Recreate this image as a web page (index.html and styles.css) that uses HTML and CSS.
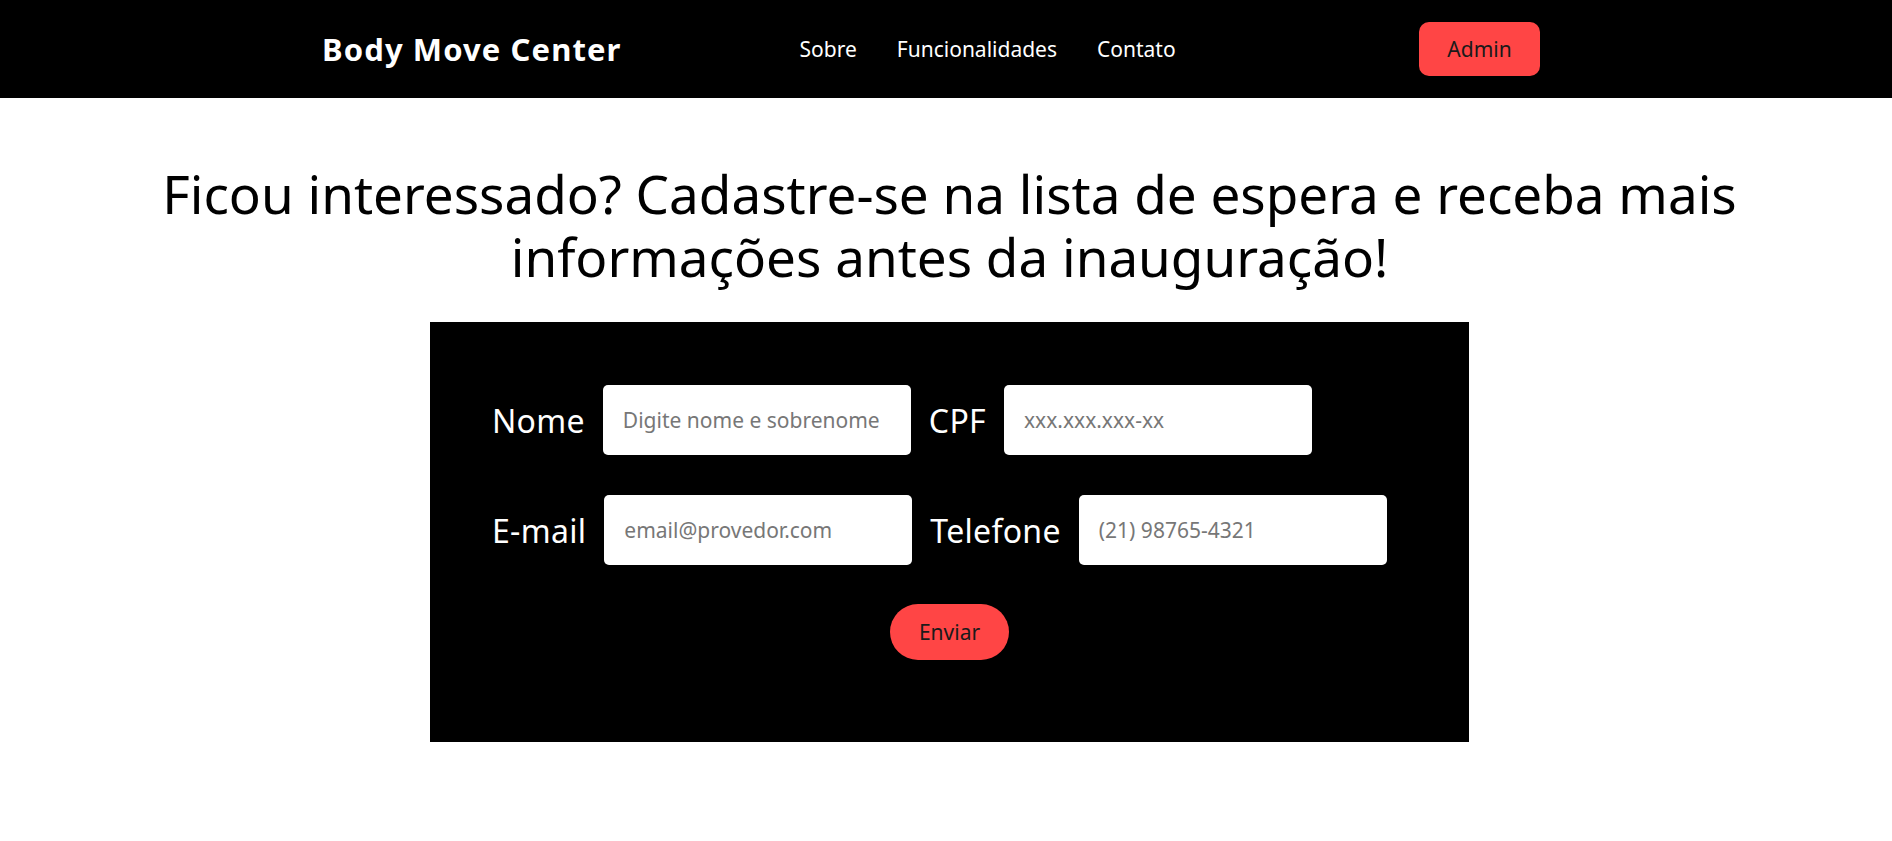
FILE: index.html
```html
<!DOCTYPE html>
<html lang="pt-BR">
<head>
<meta charset="utf-8">
<title>Body Move Center</title>
<link rel="stylesheet" href="styles.css">
</head>
<body>
<header class="topbar">
  <div class="brand">Body Move Center</div>
  <nav class="nav">
    <a href="#" class="nav-link">Sobre</a>
    <a href="#" class="nav-link">Funcionalidades</a>
    <a href="#" class="nav-link">Contato</a>
  </nav>
  <button class="admin-btn">Admin</button>
</header>
<main class="main">
  <h1 class="title">Ficou interessado? Cadastre-se na lista de espera e receba mais informações antes da inauguração!</h1>
  <form class="signup">
    <div class="row">
      <label class="field-label" for="nome">Nome</label>
      <input class="field-input" id="nome" type="text" placeholder="Digite nome e sobrenome">
      <label class="field-label" for="cpf">CPF</label>
      <input class="field-input" id="cpf" type="text" placeholder="xxx.xxx.xxx-xx">
    </div>
    <div class="row">
      <label class="field-label" for="email">E-mail</label>
      <input class="field-input" id="email" type="text" placeholder="email@provedor.com">
      <label class="field-label" for="tel">Telefone</label>
      <input class="field-input" id="tel" type="text" placeholder="(21) 98765-4321">
    </div>
    <div class="actions">
      <button type="button" class="send-btn">Enviar</button>
    </div>
  </form>
</main>
</body>
</html>
```
FILE: styles.css
```css
* { box-sizing: border-box; }
html, body { margin: 0; padding: 0; background: #fff; }
body { font-family: "Noto Sans", "Open Sans", sans-serif; color: #000; }

.topbar {
  height: 98px;
  background: #000;
  display: flex;
  align-items: center;
  padding: 0 352px 0 322px;
}
.brand {
  color: #fff;
  font-weight: 700;
  font-size: 31px;
  letter-spacing: 1.1px;
  white-space: nowrap;
}
.nav {
  display: flex;
  gap: 40px;
  margin-left: 178px;
}
.nav-link {
  color: #fff;
  text-decoration: none;
  font-size: 21px;
}
.admin-btn {
  margin-left: auto;
  width: 121px;
  height: 54px;
  border: none;
  border-radius: 10px;
  background: #ff4545;
  color: #1a1a1a;
  font-family: inherit;
  font-size: 21px;
}

.main {
  padding-left: 7px;
  display: flex;
  flex-direction: column;
  align-items: center;
}
.title {
  margin: 64px 0 0;
  font-weight: 400;
  font-size: 53px;
  line-height: 63px;
  text-align: center;
  width: 1600px;
}
.signup {
  margin-top: 34px;
  width: 1039px;
  height: 420px;
  background: #000;
  padding: 63px 0 0 62px;
  display: flex;
  flex-direction: column;
}
.row {
  display: flex;
  align-items: center;
  gap: 18px;
  margin-bottom: 40px;
}
.field-label {
  color: #fff;
  font-size: 32px;
  letter-spacing: 0.3px;
}
.field-input {
  width: 308px;
  height: 70px;
  border: none;
  border-radius: 5px;
  padding: 0 20px;
  font-family: inherit;
  font-size: 21px;
  color: #333;
  background: #fff;
}
.field-input::placeholder { color: #777; }
.actions {
  display: flex;
  justify-content: center;
  padding-right: 62px;
  margin-top: -1px;
}
.send-btn {
  width: 119px;
  height: 56px;
  border: none;
  border-radius: 28px;
  background: #ff4545;
  color: #1a1a1a;
  font-family: inherit;
  font-size: 21px;
}
```
